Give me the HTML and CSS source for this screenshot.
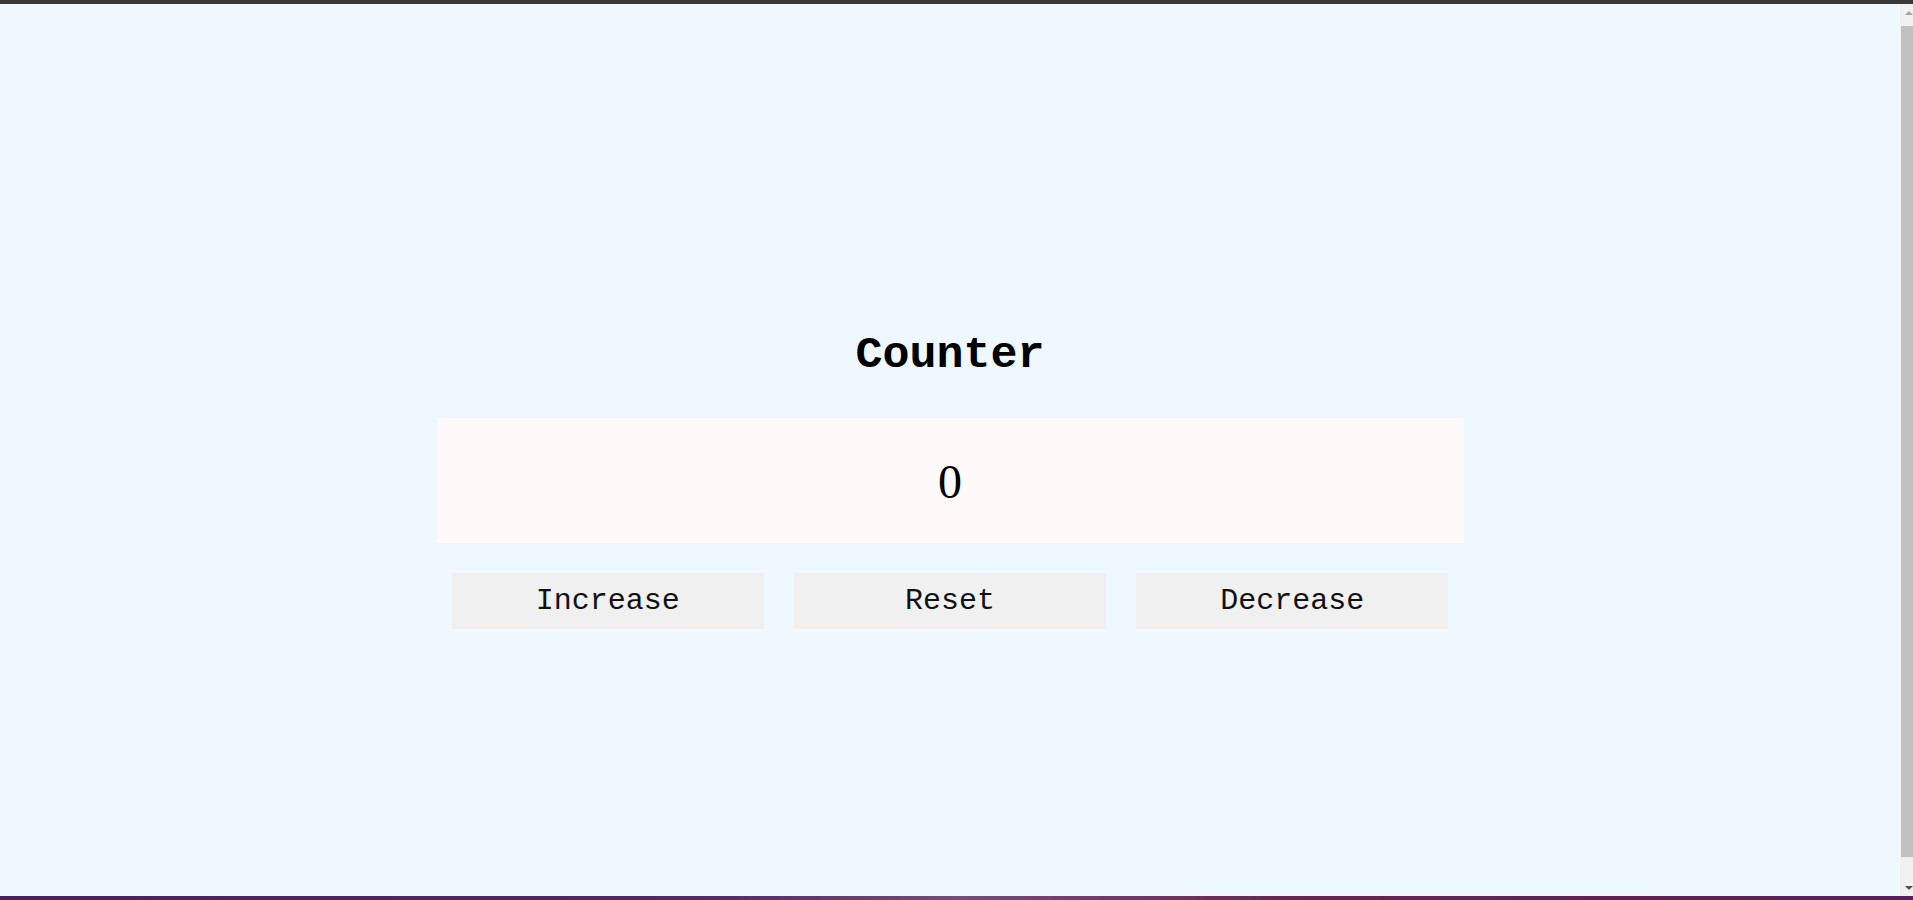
FILE: index.html
```html
<!DOCTYPE html>
<html lang="en">
<head>
<meta charset="utf-8">
<title>Counter</title>
<link rel="stylesheet" href="styles.css">
</head>
<body class="page">
  <div class="topbar"></div>
  <div class="viewport">
    <main class="main">
      <div class="counter">
        <h1 class="title">Counter</h1>
        <div class="display">0</div>
        <div class="controls">
          <button class="btn">Increase</button>
          <button class="btn">Reset</button>
          <button class="btn">Decrease</button>
        </div>
      </div>
    </main>
    <div class="scrollbar">
      <div class="sb-btn"><span class="arrow-up"></span></div>
      <div class="sb-track"><div class="sb-thumb"></div></div>
      <div class="sb-btn"><span class="arrow-down"></span></div>
    </div>
  </div>
  <div class="taskbar"></div>
</body>
</html>
```
FILE: styles.css
```css
* { box-sizing: border-box; }
html, body { margin: 0; padding: 0; }
.page {
  width: 1913px;
  height: 900px;
  overflow: hidden;
  display: flex;
  flex-direction: column;
  background: #f0f8ff;
}
.topbar {
  height: 4px;
  background: #393939;
  flex: none;
}
.viewport {
  flex: 1;
  display: flex;
  min-height: 0;
}
.main {
  flex: 1;
  background: #f0f8ff;
  padding-top: 326px;
}
.counter {
  width: 1027px;
  margin: 0 auto;
}
.title {
  margin: 0 0 37px;
  font-family: "Liberation Mono", "Courier New", monospace;
  font-weight: bold;
  font-size: 45px;
  line-height: 51px;
  text-align: center;
  color: #000;
}
.display {
  height: 125px;
  background: #fffafa;
  display: flex;
  align-items: center;
  justify-content: center;
  padding-top: 2px;
  font-family: "Liberation Serif", "Times New Roman", serif;
  font-size: 48px;
  color: #000;
}
.controls {
  margin-top: 30px;
  display: flex;
  gap: 30px;
  padding: 0 15px;
}
.btn {
  flex: 1;
  height: 56px;
  border: none;
  background: #f0f0f0;
  font-family: "Liberation Mono", "Courier New", monospace;
  font-size: 30px;
  color: #111;
  padding: 0;
  margin: 0;
}
.scrollbar {
  width: 13px;
  flex: none;
  background: #f1f1f1;
  display: flex;
  flex-direction: column;
}
.sb-btn {
  height: 17px;
  flex: none;
  display: flex;
  align-items: center;
  justify-content: flex-end;
  padding-right: 0;
}
.arrow-up {
  width: 0;
  height: 0;
  border-left: 4px solid transparent;
  border-right: 4px solid transparent;
  border-bottom: 4px solid #a3a3a3;
  margin-right: 0;
}
.arrow-down {
  width: 0;
  height: 0;
  border-left: 4px solid transparent;
  border-right: 4px solid transparent;
  border-top: 4px solid #505050;
}
.sb-track {
  flex: 1;
  padding: 5px 0 22px 1px;
  display: flex;
}
.sb-thumb {
  flex: 1;
  background: #c1c1c1;
}
.taskbar {
  height: 4px;
  flex: none;
  background: linear-gradient(90deg, #4e1e5e 0, #562666 700px, #7a4a7a 960px, #6a2252 1300px, #5c1e5e 1913px);
}
```
